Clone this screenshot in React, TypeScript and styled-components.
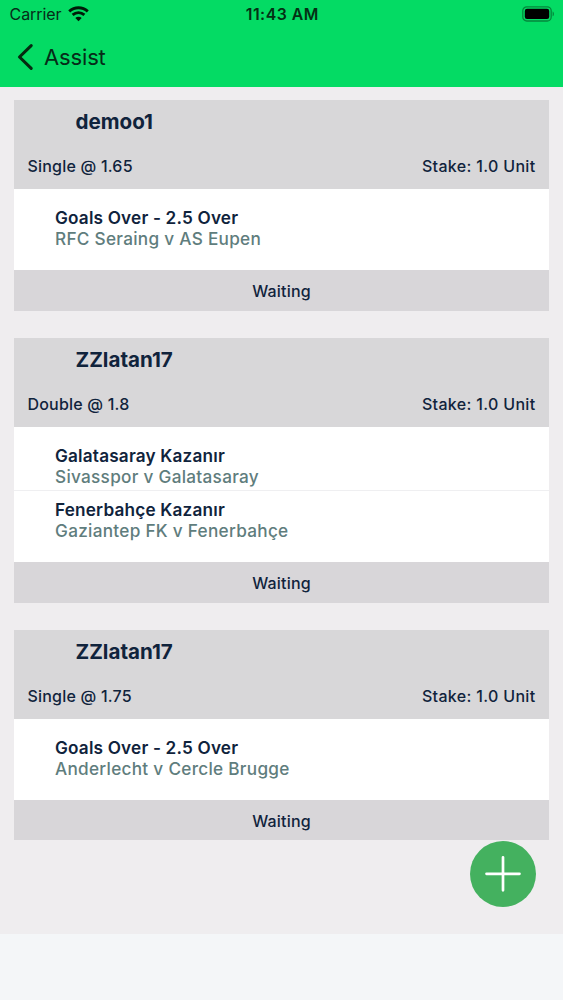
import React from "react";
import styled, { createGlobalStyle } from "styled-components";

const GlobalStyle = createGlobalStyle`
  * { box-sizing: border-box; }
  body { margin: 0; background: #f4f6f8; font-family: Inter, "Liberation Sans", sans-serif; }
`;

const Phone = styled.div`
  display: flex;
  flex-direction: column;
  position: relative;
  height: 1000px;
  overflow: hidden;
`;

const TopBar = styled.header`
  height: 87px;
  background: #04db64;
  color: #062c18;
`;

const StatusBar = styled.div`
  display: grid;
  grid-template-columns: 1fr auto 1fr;
  align-items: center;
  height: 28px;
  padding: 0 8px 0 9.5px;
`;

const Carrier = styled.div`
  display: flex;
  align-items: center;
  gap: 6px;
  font-size: 16px;
  letter-spacing: -0.05px;
`;

const Clock = styled.div`
  padding-top: 1px;
  font-size: 15.8px;
  font-weight: 600;
  letter-spacing: 0.5px;
  color: #043014;
`;

const Battery = styled.svg`
  justify-self: end;
`;

const NavBar = styled.div`
  display: flex;
  align-items: center;
  height: 58px;
  padding-left: 17px;
`;

const NavTitle = styled.h1`
  margin: 0 0 0 10px;
  font-size: 22px;
  letter-spacing: -0.15px;
  font-weight: 400;
`;

const Feed = styled.main`
  display: flex;
  flex-direction: column;
  gap: 27px;
  height: 847px;
  padding: 13.45px 14px 0;
  background: #efedef;
`;

const Card = styled.article`
  background: #fff;
  color: #10233c;
`;

const CardHead = styled.header`
  height: 88.6px;
  background: #d8d7d9;
`;

const UserName = styled.h2`
  margin: 0;
  padding: 5.8px 0 0 61.5px;
  height: 50.6px;
  font-size: 20.6px;
  line-height: 32px;
  font-weight: 700;
`;

const BetLine = styled.div`
  display: flex;
  justify-content: space-between;
  padding: 0 13.5px;
  font-size: 16px;
  line-height: 31px;
  font-weight: 500;
  letter-spacing: 0.2px;
`;

const Stake = styled.span`
  letter-spacing: 0.33px;
`;

const Picks = styled.div`
  padding: 9px 0 17.9px;
`;

const Pick = styled.div`
  height: 54.5px;
  padding: 9.3px 0 0 41px;
  font-size: 17.2px;
  line-height: 21px;

  & + & {
    padding-top: 8.1px;
    border-top: 1px solid #efeff1;
  }
`;

const Choice = styled.div`
  font-weight: 600;
  letter-spacing: 0.18px;
`;

const Match = styled.div`
  font-weight: 500;
  letter-spacing: 0.28px;
  color: #5f7d7d;
`;

const Status = styled.footer`
  height: 40.5px;
  background: #d8d6d9;
  font-size: 16px;
  line-height: 42px;
  font-weight: 500;
  letter-spacing: 0.2px;
  text-align: center;
`;

const AddButton = styled.button`
  position: absolute;
  left: 470px;
  top: 840.5px;
  width: 66px;
  height: 66px;
  padding: 0;
  border: 0;
  border-radius: 50%;
  background: #44b15f;
`;

const bets = [
  {
    user: "demoo1",
    odds: "Single @ 1.65",
    picks: [["Goals Over - 2.5 Over", "RFC Seraing v AS Eupen"]],
  },
  {
    user: "ZZlatan17",
    odds: "Double @ 1.8",
    picks: [
      ["Galatasaray Kazanır", "Sivasspor v Galatasaray"],
      ["Fenerbahçe Kazanır", "Gaziantep FK v Fenerbahçe"],
    ],
  },
  {
    user: "ZZlatan17",
    odds: "Single @ 1.75",
    picks: [["Goals Over - 2.5 Over", "Anderlecht v Cercle Brugge"]],
  },
];

export default function App() {
  return (
    <Phone>
      <GlobalStyle />
      <TopBar>
        <StatusBar>
          <Carrier>
            <span>Carrier</span>
            <svg width="21" height="16" viewBox="0 0 21 16" fill="none" stroke="#001c08" strokeWidth="2.9">
              <path d="M1.2 5.4C6.6.6 14.4.6 19.8 5.4" />
              <path d="M4.6 8.9C8.2 5.9 12.8 5.9 16.4 8.9" />
              <path d="M7.3 11.9C9.2 10.3 11.8 10.3 13.7 11.9L10.5 15.2Z" fill="#001c08" stroke="none" />
            </svg>
          </Carrier>
          <Clock>11:43 AM</Clock>
          <Battery width="33" height="16" viewBox="0 0 33 16">
            <rect x="0.8" y="0.8" width="28.4" height="14.2" rx="4" fill="none" stroke="#04883c" strokeWidth="1.3" />
            <rect x="2.8" y="2.8" width="24.4" height="10.2" rx="2.2" fill="#000" />
            <path d="M30.6 5.5C32.4 6.1 32.4 9.7 30.6 10.3Z" fill="#04883c" />
          </Battery>
        </StatusBar>
        <NavBar>
          <svg width="17" height="28" viewBox="0 0 17 28" fill="none" stroke="#052a10" strokeWidth="3.1" strokeLinecap="round" strokeLinejoin="round">
            <path d="M14.2 2.7L2.5 14L14.2 25.3" />
          </svg>
          <NavTitle>Assist</NavTitle>
        </NavBar>
      </TopBar>
      <Feed>
        {bets.map((bet, i) => (
          <Card key={i}>
            <CardHead>
              <UserName>{bet.user}</UserName>
              <BetLine>
                <span>{bet.odds}</span>
                <Stake>Stake: 1.0 Unit</Stake>
              </BetLine>
            </CardHead>
            <Picks>
              {bet.picks.map(([choice, match]) => (
                <Pick key={choice}>
                  <Choice>{choice}</Choice>
                  <Match>{match}</Match>
                </Pick>
              ))}
            </Picks>
            <Status>Waiting</Status>
          </Card>
        ))}
      </Feed>
      <AddButton aria-label="Add">
        <svg width="66" height="66" viewBox="0 0 66 66" stroke="#fff" strokeWidth="2.7" strokeLinecap="round">
          <path d="M33 16.3V49.3M16.5 32.8H49.5" />
        </svg>
      </AddButton>
    </Phone>
  );
}
